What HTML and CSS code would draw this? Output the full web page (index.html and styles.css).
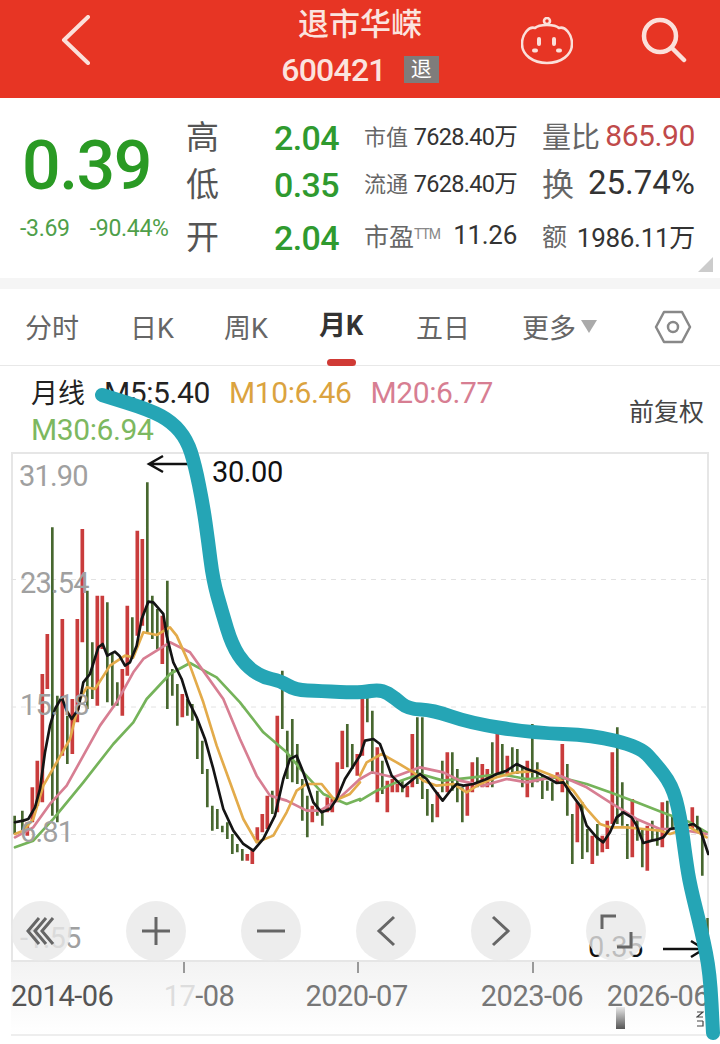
FILE: index.html
```html
<!DOCTYPE html>
<html lang="zh-CN">
<head>
  <meta charset="UTF-8" />
  <title>退市华嵘 600421</title>
  <link rel="stylesheet" href="styles.css">
</head>
<body>
<div class="page">
  <header class="topbar">
    <svg class="back" width="30" height="50" viewBox="0 0 30 50"><path d="M27 2 L3 25 L27 48" /></svg>
    <div class="title">
      <h1>退市华嵘</h1>
      <p><span class="code">600421</span><span class="badge">退</span></p>
    </div>
    <svg class="mascot" width="52" height="50" viewBox="0 0 52 50">
      <circle cx="26" cy="4" r="3" />
      <path d="M14 11 C18 7 34 7 38 11 C44 9 51 17 51 27 C51 38 40 46 26 46 C12 46 1 38 1 27 C1 17 8 9 14 11 Z" />
      <path class="eye" d="M18 22 V27 M33 22 V27" />
      <path class="eye" d="M13 33.5 H15 M37 33.5 H39" />
    </svg>
    <svg class="search" width="46" height="46" viewBox="0 0 46 46"><circle cx="19" cy="19" r="16" /><path d="M31 31 L43 43" /></svg>
  </header>

  <section class="quote">
    <div class="price">
      <div class="last">0.39</div>
      <div class="change"><span>-3.69</span><span>-90.44%</span></div>
    </div>
    <div class="stats">
      <span class="hl">高</span><span class="val">2.04</span>
      <span class="mid"><i>市值</i><b>7628.40万</b></span>
      <span class="right"><i class="big">量比</i><b class="red">865.90</b></span>

      <span class="hl">低</span><span class="val">0.35</span>
      <span class="mid"><i>流通</i><b>7628.40万</b></span>
      <span class="right"><i class="huge">换</i><b class="large">25.74%</b></span>

      <span class="hl">开</span><span class="val">2.04</span>
      <span class="mid"><i class="wide">市盈<sup>TTM</sup></i><b class="pe">11.26</b></span>
      <span class="right"><i>额</i><b>1986.11万</b></span>
    </div>
    <span class="corner"></span>
  </section>

  <div class="divider"></div>

  <nav class="tabs">
    <a>分时</a>
    <a>日K</a>
    <a>周K</a>
    <a class="active">月K</a>
    <a>五日</a>
    <a class="more">更多<span class="caret"></span></a>
    <svg class="hex" width="38" height="34" viewBox="0 0 38 34"><path d="M10 2 H28 L36 17 L28 32 H10 L2 17 Z" /><circle cx="19" cy="17" r="5" /></svg>
  </nav>

  <div class="legend">
    <div class="legend-lines">
      <span class="name">月线</span><span>M5:5.40</span><span class="m10">M10:6.46</span><span class="m20">M20:6.77</span><br>
      <span class="m30">M30:6.94</span>
    </div>
    <span class="adjust">前复权</span>
  </div>

  <div class="chart">
    <svg width="698" height="510" viewBox="11 453 698 510">
      <path class="grid" d="M11 580.5 H709 M11 708 H709 M11 835.5 H709" />

      <g transform="translate(0 470) scale(.3333)">
        <path class="cg" d="M44 1040V1095M67 1025V1090M157 175V1040M172 680V1060M202 740V885M262 365V720M277 520V690M322 400V700M337 555V710M352 640V710M397 445V570M442 40V490M457 380V510M472 420V540M502 335V720M517 600V680M532 645V770M562 690V740M577 705V755M592 750V870M607 815V915M622 900V1015M637 1010V1085M652 1020V1080M667 1070V1090M682 1060V1110M697 1095V1155M712 1125V1150M727 1140V1175M817 965V1035M847 605V780M862 785V930M877 750V940M892 825V945M907 930V1055M922 980V1105M952 965V1040M967 1020V1070M1042 765V895M1057 825V900" />
        <path class="cr" d="M82 1060V1100M97 955V1060M112 875V1010M127 615V1000M142 495V660M187 450V860M217 690V855M232 450V760M247 180V520M292 380V710M307 380V540M367 600V740M382 410V620M412 185V500M427 210V470M487 440V585M547 675V745M742 1155V1175M757 1140V1185M772 1075V1120M787 1035V1090M802 980V1080M832 740V1030M937 1010V1060M982 985V1030M997 990V1030M1012 880V1000M1027 785V900M1072 855V920" />
        <path class="ma green" d="M45 1135 100 1115 160 1050 250 940 340 825 400 760 440 690 510 615 570 582 650 625 720 700 790 790 860 850 910 910 970 975 1040 1005 1080 990" />
        <path class="ma pink" d="M45 1105 100 1075 150 1005 200 950 250 860 300 770 350 700 400 610 430 570 510 520 570 550 620 620 670 690 720 810 770 920 810 980 860 995 920 1025 960 1025 1010 995 1080 930" />
        <path class="ma orange" d="M45 1095 70 1085 100 1050 130 950 170 880 210 810 240 690 260 655 285 660 330 590 375 560 400 565 430 490 470 498 510 475 530 500 570 590 610 700 650 830 690 940 730 1050 770 1120 820 1100 860 1030 890 965 920 945 965 945 1005 995 1050 975 1080 940" />
        <path class="ma black" d="M45 1060 70 1055 85 1050 105 1015 120 960 135 850 150 770 165 720 185 685 200 725 215 750 235 720 250 640 270 615 295 535 308 525 322 560 345 548 358 560 375 590 390 580 410 530 425 450 445 398 460 400 490 435 500 500 520 580 545 630 565 695 590 745 615 810 640 900 670 1020 700 1085 730 1125 760 1145 790 1110 825 1040 850 930 870 870 890 860 910 910 940 1000 965 1030 990 1020 1010 990 1035 930 1080 860" />
      </g>

      <g transform="translate(360 660) scale(.3333)">
        <path class="cg" d="M22 115V190M37 155V345M67 305V405M127 365V400M172 175V375M187 175V420M202 390V470M217 435V490M247 305V400M277 280V395M292 330V430M307 385V490M352 295V385M397 250V385M427 255V345M457 265V340M472 270V345M487 325V385M517 195V385M532 310V370M547 350V420M562 365V395M577 370V425M622 315V470M637 465V615M667 430V600M682 510V580M712 495V590M772 205V495M787 370V500M802 495V600M832 480V545M847 510V625M877 485V545M892 510V560M922 425V520M937 470V510M1012 470V520M1027 510V650" />
        <path class="cr" d="M7 120V290M52 265V430M82 365V460M97 360V400M112 375V400M142 380V415M157 225V385M232 400V475M262 280V400M322 380V470M337 310V400M367 315V385M382 330V385M412 220V345M442 290V345M502 305V415M592 340V370M607 255V400M652 430V550M697 530V615M727 530V580M742 485V570M757 280V495M817 420V595M862 500V635M907 430V565M997 445V510" />
        <path class="ma green" d="M0 425 50 395 110 370 180 345 250 365 340 355 420 345 500 360 600 355 680 375 750 400 830 430 920 465 990 490 1040 520" />
        <path class="ma pink" d="M0 360 35 340 100 355 180 325 250 340 300 365 370 380 440 360 500 370 600 350 680 385 750 430 830 480 900 510 950 510 1040 525" />
        <path class="ma orange" d="M0 350 20 310 65 285 110 310 160 340 190 365 230 380 280 375 320 400 360 375 410 355 470 340 540 335 590 355 640 395 680 450 720 495 750 505 800 505 850 510 900 515 930 525 990 505 1040 535" />
        <path class="ma black" d="M0 290 15 245 40 240 60 255 75 295 95 350 130 385 160 360 180 345 200 360 225 395 248 425 275 390 290 375 310 380 340 375 380 360 410 345 440 335 470 315 500 330 530 340 560 355 590 372 610 370 630 400 660 440 680 500 710 535 730 550 750 520 770 475 790 460 815 475 830 500 850 552 875 545 890 542 910 535 930 510 960 505 1000 495 1020 510 1045 585" />
      </g>
      <path class="last-bar" d="M707.5 919V952" />

      <text class="ylabel" x="19" y="487">31.90</text>
      <text class="ylabel" x="20" y="594">23.54</text>
      <text class="ylabel" x="20" y="716">15.18</text>
      <text class="ylabel" x="20" y="843">6.81</text>
      <text class="ylabel" x="20" y="949">-1.55</text>

      <path class="note" d="M190 465 H149 M163 457 L149 465 L163 473" />
      <text class="note-text" x="212" y="483">30.00</text>
      <path class="note" d="M663 950 H704 M691 942 L704 950 L691 958" />
      <text class="note-text" x="588" y="958">0.35</text>
    </svg>

    <div class="controls">
      <button><svg width="30" height="30" viewBox="0 0 30 30"><path d="M13 2 L2 15 L13 28 M20 2 L9 15 L20 28 M27 2 L16 15 L27 28" /></svg></button>
      <button><svg width="32" height="32" viewBox="0 0 32 32"><path d="M16 2 V30 M2 16 H30" /></svg></button>
      <button><svg width="32" height="32" viewBox="0 0 32 32"><path d="M2 16 H30" /></svg></button>
      <button><svg width="20" height="32" viewBox="0 0 20 32"><path d="M18 2 L3 16 L18 30" /></svg></button>
      <button><svg width="20" height="32" viewBox="0 0 20 32"><path d="M2 2 L17 16 L2 30" /></svg></button>
      <button><svg width="34" height="36" viewBox="0 0 34 36"><path d="M3 16 V3 H17 M32 19 V34 H18" /></svg></button>
    </div>
  </div>

  <div class="axis">
    <div class="ticks"><i></i><i></i><i></i></div>
    <div class="dates">
      <span class="first">2014-06</span>
      <span class="faded"><em>17</em>-08</span>
      <span>2020-07</span>
      <span>2023-06</span>
      <span>2026-06</span>
    </div>
    <div class="smudge"></div>
    <svg class="marks" width="8" height="16" viewBox="0 0 8 16"><path d="M1 1 H7 L1 6 H7 M1 10 H7 M7 10 V15 H1" /></svg>
  </div>
  <div class="bottom-line"></div>

  <svg class="scribble" width="720" height="1044" viewBox="0 0 720 1044">
    <path d="M102 395 L126 402.5 Q150 410 161 416 Q172 422 179.5 431 Q187 440 191 452.5 Q195 465 199 485 Q203 505 205.5 522.5 Q208 540 210.5 560 Q213 580 217.5 596 Q222 612 227 628.5 Q232 645 238.5 655 Q245 665 253.5 671 Q262 677 271.5 679 Q281 681 288 685.5 Q295 690 307.5 690.5 Q320 691 340 692 Q360 693 370.5 691 Q381 689 388 693.5 Q395 698 401.5 703.5 Q408 709 420.5 709.5 Q433 710 451.5 716.5 Q470 723 501.5 728 Q533 733 563 734 Q593 735 616.5 741 Q640 747 647.5 755 Q655 763 663.5 774 Q672 785 676 800 Q680 815 683 837.5 Q686 860 688 872.5 Q690 885 696 909 Q702 933 706 953 Q710 973 711.5 1003 L713 1033" />
  </svg>
</div>
</body>
</html>
```

FILE: styles.css
```css
body {
  margin: 0;
  background: #fff;
  font-family: Roboto, "Noto Sans CJK SC", sans-serif;
  color: #333;
}
i, em {
  font-style: normal;
}
.page {
  position: relative;
  width: 720px;
  height: 1044px;
  overflow: hidden;
}

/* red title bar */
.topbar {
  height: 98px;
  background: #e73524;
  display: flex;
  align-items: center;
  color: #fbe4df;
}
.topbar svg {
  fill: none;
  stroke: #fbe0da;
  stroke-linecap: round;
  stroke-linejoin: round;
}
.back {
  margin: -18px 0 0 61px;
  stroke-width: 4;
}
.title {
  width: 180px;
  margin: -3px 0 0 179px;
  text-align: center;
}
.title h1 {
  margin: 0;
  font-size: 31px;
  line-height: 44px;
  font-weight: 500;
}
.title p {
  margin: 0;
  height: 46px;
  display: flex;
  justify-content: center;
  align-items: center;
  gap: 18px;
  white-space: nowrap;
}
.code {
  font-size: 32px;
  font-weight: 500;
  letter-spacing: -.8px;
}
.badge {
  width: 35px;
  height: 27px;
  background: #7f7c7b;
  color: #fff;
  font-size: 21px;
  line-height: 27px;
}
.mascot {
  margin: -14px 0 0 71px;
  stroke-width: 2.6;
}
.mascot .eye {
  stroke-width: 4;
}
.search {
  margin: -18px 0 0 68px;
  stroke-width: 4.5;
}

/* quote block */
.quote {
  position: relative;
  height: 180px;
  display: flex;
}
.price {
  width: 186px;
  box-sizing: border-box;
  padding: 34px 0 0 20px;
  color: #2a9a24;
}
.last {
  margin-left: 2px;
  font-size: 68px;
  line-height: 68px;
  font-weight: 500;
  letter-spacing: -1.5px;
}
.change {
  margin-top: 17px;
  display: flex;
  gap: 20px;
  font-size: 23px;
  line-height: 24px;
  color: #4f9f4a;
  letter-spacing: -.3px;
  white-space: nowrap;
}
.stats {
  padding-top: 18px;
  display: grid;
  grid-template-columns: 88px 90px 178px 160px;
  grid-template-rows: 44px 50px 56px;
  align-items: center;
}
.hl {
  margin-top: -7px;
  font-size: 33px;
  color: #555;
}
.val {
  font-size: 34px;
  font-weight: 500;
  color: #2f9a2f;
  letter-spacing: -.6px;
}
.mid, .right {
  margin-top: -6px;
  width: 153px;
  display: flex;
  justify-content: space-between;
  align-items: center;
  color: #666;
}
.mid i {
  font-size: 22px;
}
.mid i.wide {
  font-size: 25px;
}
.mid b, .right b {
  font-weight: 400;
  color: #333;
  font-size: 23.5px;
  letter-spacing: -.7px;
}
.mid b.pe {
  font-size: 26px;
  letter-spacing: -.3px;
}
.mid sup {
  font-size: 14px;
  vertical-align: 7px;
  line-height: 0;
  letter-spacing: -1px;
  color: #888;
}
.right i {
  font-size: 25px;
}
.right i.big {
  font-size: 29px;
}
.right i.huge {
  font-size: 32px;
}
.right b {
  font-size: 26px;
  letter-spacing: -.3px;
}
.right b.red {
  color: #c04a4a;
  font-size: 30px;
  letter-spacing: -.4px;
}
.right b.large {
  font-size: 33px;
  letter-spacing: 0;
}
.corner {
  position: absolute;
  right: 7px;
  bottom: 6px;
  border-style: solid;
  border-width: 0 0 15px 15px;
  border-color: transparent transparent #ccc transparent;
}
.divider {
  height: 11px;
  background: #f5f5f5;
}

/* period tabs */
.tabs {
  height: 77px;
  box-sizing: border-box;
  border-bottom: 1px solid #e8e8e8;
  display: grid;
  grid-template-columns: 105px 94px 95px 97px 106px 132px 40px;
  align-items: center;
  padding: 0 0 2px 25px;
  font-size: 27px;
  color: #666;
}
.tabs a {
  white-space: nowrap;
}
.tabs .active {
  position: relative;
  align-self: stretch;
  line-height: 75px;
  font-weight: 700;
  color: #333;
}
.tabs .active::after {
  content: "";
  position: absolute;
  left: 8px;
  bottom: -2px;
  width: 29px;
  height: 7px;
  border-radius: 4px;
  background: #d03a35;
}
.tabs .more {
  display: flex;
  align-items: center;
  gap: 5px;
}
.caret {
  border-style: solid;
  border-width: 13px 8.5px 0;
  border-color: #aaa transparent transparent;
}
.hex {
  fill: none;
  stroke: #888;
  stroke-width: 2.5;
  stroke-linejoin: round;
}

/* moving average legend */
.legend {
  height: 86px;
  position: relative;
  box-sizing: border-box;
  padding: 9px 0 0 31px;
  font-size: 30px;
  line-height: 36px;
  letter-spacing: -.4px;
  color: #222;
}
.legend-lines {
  white-space: nowrap;
}
.legend-lines span {
  margin-right: 19px;
}
.legend .name {
  font-size: 27px;
  letter-spacing: 0;
}
.m10 { color: #dba33f; }
.m20 { color: #d77e92; }
.m30 { color: #7db860; }
.adjust {
  position: absolute;
  right: 16px;
  top: 29px;
  font-size: 25px;
  letter-spacing: 0;
  color: #444;
}

/* kline chart */
.chart {
  position: relative;
  width: 698px;
  height: 510px;
  margin-left: 11px;
  box-sizing: border-box;
  border: 2px solid #e6e6e6;
}
.chart > svg {
  position: absolute;
  left: -2px;
  top: -2px;
}
.grid {
  stroke: #e2e2e2;
  stroke-width: 1;
  stroke-dasharray: 5 5;
  fill: none;
}
.cg, .cr {
  fill: none;
}
.cg {
  stroke: #47672f;
  stroke-width: 8;
}
.cr {
  stroke: #c93c3c;
  stroke-width: 11;
}
.ma {
  fill: none;
  stroke-width: 8;
  stroke-linejoin: round;
  stroke-linecap: round;
}
.green { stroke: #75b35a; }
.pink { stroke: #d77e92; }
.orange { stroke: #e3ab4a; }
.black { stroke: #141414; }
.last-bar {
  stroke: #47672f;
  stroke-width: 2.5;
}
.ylabel {
  font-family: Roboto, sans-serif;
  font-size: 29px;
  letter-spacing: -.8px;
  fill: #a0a0a0;
}
.note {
  fill: none;
  stroke: #111;
  stroke-width: 2.5;
}
.note-text {
  font-family: Roboto, sans-serif;
  font-size: 29px;
  letter-spacing: -.4px;
  fill: #111;
}
.controls {
  position: absolute;
  left: -2px;
  top: 447px;
  display: flex;
  gap: 55px;
}
.controls button {
  width: 60px;
  height: 60px;
  padding: 0;
  border: 0;
  border-radius: 50%;
  background: rgba(232, 232, 232, .8);
  display: flex;
  align-items: center;
  justify-content: center;
}
.controls svg {
  fill: none;
  stroke: #666;
  stroke-width: 3;
}

/* date axis */
.axis {
  position: relative;
  height: 72px;
  margin-left: 11px;
  width: 698px;
  background: linear-gradient(#f3f3f3, #fafafa 60%, #fff);
}
.ticks {
  height: 11px;
  display: grid;
  grid-template-columns: 174px 175px 175px;
  padding-left: 172px;
}
.ticks i {
  display: block;
  width: 1.5px;
  background: #999;
}
.dates {
  margin-top: 8px;
  display: flex;
  font-size: 29px;
  line-height: 30px;
  letter-spacing: -.5px;
  color: #777;
}
.dates span {
  white-space: nowrap;
}
.dates .first { color: #555; width: 154px; }
.dates .faded { width: 143px; }
.dates .faded em { color: #ddd; }
.dates span:nth-child(3) { width: 177px; }
.dates span:nth-child(4) { width: 127px; }
.smudge {
  position: absolute;
  left: 605px;
  top: 45px;
  width: 9px;
  height: 22px;
  background: linear-gradient(#e8e8e8, #555);
}
.marks {
  position: absolute;
  left: 685px;
  top: 49px;
  fill: none;
  stroke: #444;
  stroke-width: 1.2;
}
.bottom-line {
  height: 2px;
  margin-left: 11px;
  background: #eee;
}

/* teal hand-drawn line on top of everything */
.scribble {
  position: absolute;
  left: 0;
  top: 0;
  pointer-events: none;
  fill: none;
  stroke: #25a5b5;
  stroke-width: 14;
  stroke-linecap: round;
  stroke-linejoin: round;
}
```
